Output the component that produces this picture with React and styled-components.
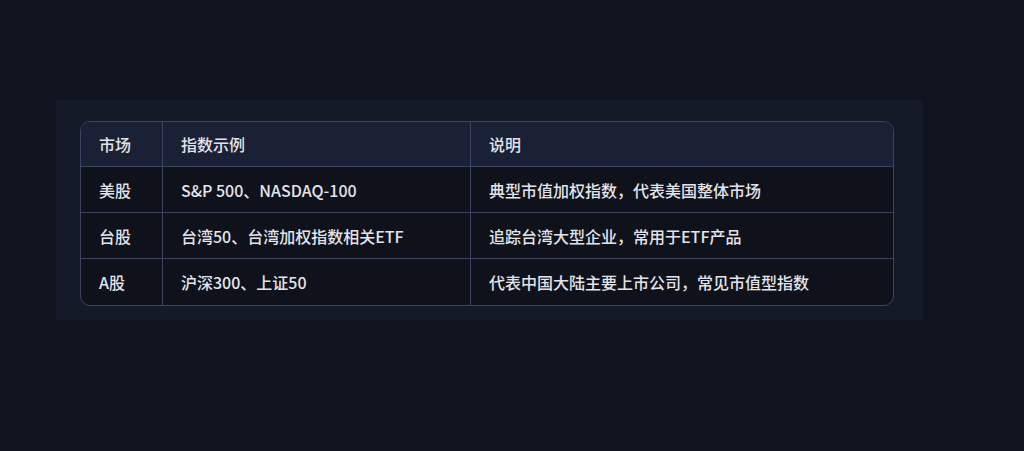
import styled, { createGlobalStyle } from "styled-components";

const rows = [
  ["美股", "S&P 500、NASDAQ-100", "典型市值加权指数，代表美国整体市场"],
  ["台股", "台湾50、台湾加权指数相关ETF", "追踪台湾大型企业，常用于ETF产品"],
  ["A股", "沪深300、上证50", "代表中国大陆主要上市公司，常见市值型指数"],
];

const App = () => {
  return (
    <>
      <GlobalStyle />
      <Page>
        <Panel>
          <Table>
            <thead>
              <tr>
                <Head>市场</Head>
                <Head>指数示例</Head>
                <Head>说明</Head>
              </tr>
            </thead>
            <tbody>
              {rows.map((r) => (
                <tr key={r[0]}>
                  {r.map((c, i) => (
                    <Cell key={i}>{c}</Cell>
                  ))}
                </tr>
              ))}
            </tbody>
          </Table>
        </Panel>
      </Page>
    </>
  );
};

const GlobalStyle = createGlobalStyle`
  html, body {
    margin: 0;
    background: #10141e;
  }
  body {
    font-family: "Noto Sans CJK SC", "Noto Sans", sans-serif;
  }
`;

// page
const Page = styled.div`
  width: 1024px;
  height: 451px;
  padding: 100px 0 0 56px;
  box-sizing: border-box;
`;

// panel behind the table
const Panel = styled.div`
  width: 867px;
  height: 220px;
  box-sizing: border-box;
  padding: 21px 29px 14px 24px;
  background: #141a27;
`;

const Table = styled.table`
  width: 814px;
  border-collapse: separate;
  border-spacing: 0;
  border: 1px solid #3b4360;
  border-radius: 10px;
  overflow: hidden;
  background: #0f121b;

  tr:last-child td {
    border-bottom: none;
  }
  th:last-child,
  td:last-child {
    border-right: none;
  }
  th:nth-child(1) { width: 82px; }
  th:nth-child(2) { width: 308px; }
`;

const Head = styled.th`
  height: 45px;
  padding: 0 18px;
  text-align: left;
  font-size: 16px;
  font-weight: 500;
  color: #e2e4ea;
  background: #1b2135;
  border-right: 1px solid #3b4360;
  border-bottom: 1px solid #3b4360;
  box-sizing: border-box;
`;

const Cell = styled.td`
  height: 46px;
  padding: 0 18px;
  font-size: 16px;
  font-weight: 500;
  color: #e2e4ea;
  border-right: 1px solid #3b4360;
  border-bottom: 1px solid #3b4360;
  box-sizing: border-box;
  white-space: nowrap;
`;

export default App;
